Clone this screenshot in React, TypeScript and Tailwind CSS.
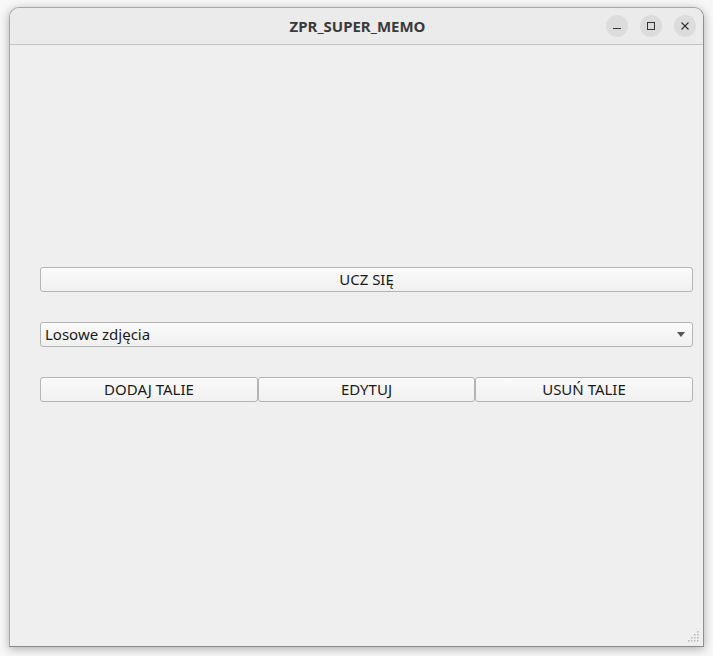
import React from 'react';

const btn =
  'h-[25px] flex items-center justify-center rounded-[3px] border border-[#b4b4b4] bg-gradient-to-b from-[#fbfbfb] to-[#f0f0f0] text-[15px] text-[#1a1a1a]';

const Grip: React.FC = () => (
  <svg width="12" height="12" viewBox="0 0 12 12" className="absolute right-[3px] bottom-[3px]">
    {[
      [9, 0],
      [6, 3],
      [9, 3],
      [3, 6],
      [6, 6],
      [9, 6],
      [0, 9],
      [3, 9],
      [6, 9],
      [9, 9],
    ].map(([x, y], i) => (
      <rect key={i} x={x} y={y} width="1.5" height="1.5" fill="#b8b8b8" />
    ))}
  </svg>
);

const App: React.FC = () => {
  return (
    <div
      className="w-[713px] h-[656px] bg-[#f7f7f7] pt-[7px] pl-[9px]"
      style={{ fontFamily: '"Noto Sans", "Open Sans", sans-serif' }}
    >
      <div className="relative w-[695px] h-[640px] rounded-t-[10px] border border-[#a8a8a8] border-b-[#8a8a8a] border-r-[#8f8f8f] bg-[#efefef] shadow-[0_2px_10px_rgba(0,0,0,0.3)] flex flex-col overflow-hidden">
        {/* title bar */}
        <div className="h-[37px] shrink-0 bg-[#ebebeb] border-b border-[#c4c4c4] flex items-center relative">
          <div className="flex-1 text-center text-[15px] font-bold text-[#3a3a3a] pl-[2px]">ZPR_SUPER_MEMO</div>
          <div className="absolute right-[7px] top-[7px] flex gap-[12px]">
            <div className="w-[22px] h-[22px] rounded-full bg-[#dcdcdc] flex items-center justify-center">
              <svg width="10" height="10" viewBox="0 0 10 10">
                <line x1="1" y1="7.5" x2="9" y2="7.5" stroke="#333" strokeWidth="1" />
              </svg>
            </div>
            <div className="w-[22px] h-[22px] rounded-full bg-[#dcdcdc] flex items-center justify-center">
              <svg width="10" height="10" viewBox="0 0 10 10">
                <rect x="1.5" y="1.5" width="7" height="7" fill="none" stroke="#333" strokeWidth="1" />
              </svg>
            </div>
            <div className="w-[22px] h-[22px] rounded-full bg-[#dcdcdc] flex items-center justify-center">
              <svg width="10" height="10" viewBox="0 0 10 10">
                <path d="M1.5 1.5 L8.5 8.5 M8.5 1.5 L1.5 8.5" stroke="#333" strokeWidth="1.1" />
              </svg>
            </div>
          </div>
        </div>

        {/* body */}
        <div className="flex-1 pl-[30px] pr-[10px] pt-[222px]">
          <div className={btn}>UCZ SIĘ</div>

          <div className="mt-[30px] h-[25px] flex items-center justify-between rounded-[3px] border border-[#b4b4b4] bg-gradient-to-b from-[#fbfbfb] to-[#f0f0f0] pl-[4px] pr-[7px] text-[15px] text-[#1a1a1a]">
            <span>Losowe zdjęcia</span>
            <svg width="8" height="5" viewBox="0 0 8 5">
              <path d="M0 0 L8 0 L4 5 Z" fill="#555" />
            </svg>
          </div>

          <div className="mt-[30px] flex">
            <div className={`${btn} w-[218px]`}>DODAJ TALIE</div>
            <div className={`${btn} w-[217px]`}>EDYTUJ</div>
            <div className={`${btn} w-[218px]`}>USUŃ TALIE</div>
          </div>
        </div>
        <Grip />
      </div>
    </div>
  );
};

export default App;
